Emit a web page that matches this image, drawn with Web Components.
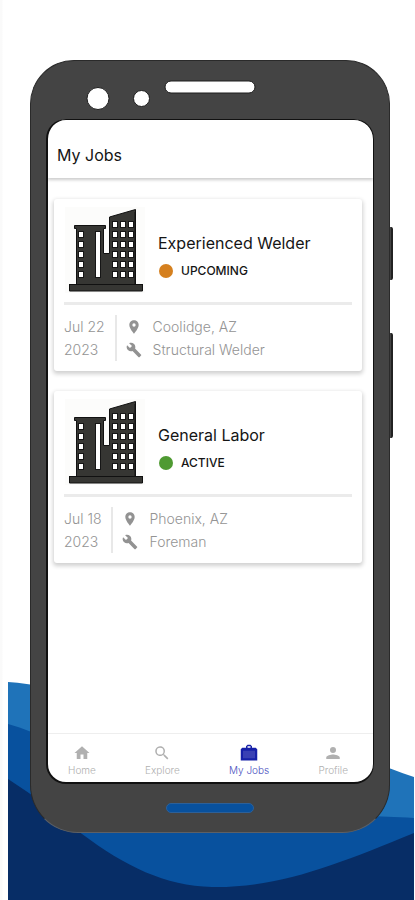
<!DOCTYPE html>
<html lang="en">
<head>
<meta charset="utf-8">
<meta name="viewport" content="width=device-width, initial-scale=1">
<title>My Jobs</title>
<style>
body { margin: 0; background: #fff; font-family: Inter, Roboto, sans-serif; color: #151515; }
</style>
</head>
<body>
<promo-scene>
  <phone-frame>
    <app-header>My Jobs</app-header>
    <job-list>
      <job-card status="upcoming" month="Jul 22" year="2023" place="Coolidge, AZ" role-name="Structural Welder">Experienced Welder</job-card>
      <job-card status="active" month="Jul 18" year="2023" place="Phoenix, AZ" role-name="Foreman">General Labor</job-card>
    </job-list>
    <tab-bar>
      <tab-item icon="home">Home</tab-item>
      <tab-item icon="search">Explore</tab-item>
      <tab-item icon="bag" active>My Jobs</tab-item>
      <tab-item icon="person">Profile</tab-item>
    </tab-bar>
  </phone-frame>
</promo-scene>
<script>
const define = (name, html, fill) => {
  const template = document.createElement('template');
  template.innerHTML = html;
  customElements.define(name, class extends HTMLElement {
    constructor() {
      super();
      this.attachShadow({ mode: 'open' }).append(template.content.cloneNode(true));
    }
    connectedCallback() { if (fill) fill(this, this.shadowRoot); }
  });
};

define('promo-scene', `
<style>
:host { display: flex; position: relative; min-height: 100vh; box-sizing: border-box; padding: 60px 25px 67px 30px; overflow: hidden;
  background: linear-gradient(90deg, #fafafa 2px, #fff 3px); }
.waves { position: absolute; left: 8px; right: 1px; bottom: 0; height: 220px; }
.waves svg { display: block; width: 100%; height: 100%; }
slot { display: flex; flex: 1; }
</style>
<div class="waves" aria-hidden="true">
<svg viewBox="8 680 406 220" preserveAspectRatio="none">
<path fill="#1f73b9" d="M8 682C110 690 170 735 240 735S350 755 414 777V900H8Z"/>
<path fill="#08519e" d="M8 724C80 744 130 800 220 812S330 812 414 818V900H8Z"/>
<path fill="#072d66" d="M8 779C45 803 65 820 82 834C125 866 165 886 212 887C280 888 338 864 414 833V900H8Z"/>
</svg></div>
<slot></slot>`);

define('phone-frame', `
<style>
:host { display: flex; flex: 1; flex-direction: column; position: relative; box-sizing: border-box; padding: 0 15px;
  background: #444; border: 1px solid #2a2a2a; border-bottom-color: #5c6066; border-radius: 44px 44px 48px 48px; }
.top svg { display: block; width: 100%; height: 58px; }
.screen { flex: 1; display: flex; flex-direction: column; background: #fff; border: 1px solid #111; border-width: 1px 1px 2px 2px; border-radius: 20px; overflow: hidden; }
.bottom { display: flex; justify-content: center; align-items: center; height: 48px; }
.bottom span { width: 86px; height: 8px; border: 1px solid #2d6098; border-radius: 5px; background: #08519e; }
.key { position: absolute; right: -4px; width: 3px; box-sizing: border-box; background: #444; border-right: 2px solid #222; border-radius: 0 2px 2px 0; }
.k1 { top: 166px; height: 53px; }
.k2 { top: 272px; height: 105px; }
</style>
<span class="key k1"></span><span class="key k2"></span>
<div class="top" aria-hidden="true"><svg viewBox="46 61 328 58">
<g fill="#fff" stroke="#1c1c1c"><circle cx="98" cy="98.5" r="11"/><circle cx="141.5" cy="98.5" r="8"/><rect x="165" y="81" width="90" height="12" rx="6"/></g>
</svg></div>
<div class="screen"><slot></slot></div>
<div class="bottom"><span></span></div>`);

define('app-header', `
<style>
:host { display: flex; align-items: center; height: 58px; padding: 12px 9px 0; box-sizing: border-box; box-shadow: 0 2px 3px #ccc; }
h1 { margin: 0; font-size: 16px; line-height: 20px; font-weight: 400; }
</style>
<h1><slot></slot></h1>`);

define('job-list', `
<style>
:host { display: flex; flex: 1; flex-direction: column; gap: 20px; padding: 21px 11px 21px 6px; }
</style>
<slot></slot>`);

const grid = (xs, ys, w, h) => ys.map(y => xs.map(x => `<rect x="${x}" y="${y}" width="${w}" height="${h}"/>`).join('')).join('');
const building = `<svg viewBox="65 207 80 86" width="80" height="86" aria-hidden="true">
<rect x="65" y="207" width="80" height="86" fill="#fcfcfb"/>
<g fill="#363633" stroke="#111" stroke-width="1">
<path d="M74.5 225.5h31v3h-2v25h6v-36.5l26-7.5v75h7v6.5h-73v-6.5h7v-56h-2z"/></g>
<path d="M69 284.500h74M76.500 229v55M103.500 229v24M135 212v72" stroke="#111" fill="none"/>
<g fill="#fff" stroke="#161616" stroke-width="1">
${grid([78.5], [231.5, 241.5, 251.5, 261.5, 271.5], 5, 6)}
${grid([112.5, 120.5, 128.5], [221.5, 231.5, 241.5, 251.5, 261.5, 271.5], 5, 6)}
<rect x="95.5" y="231.5" width="5" height="46"/></g></svg>`;
const pin = '<svg viewBox="0 0 24 24" width="16" height="16" aria-hidden="true"><path fill="#929292" d="M12 2C8.130 2 5 5.130 5 9c0 5.250 7 13 7 13s7-7.750 7-13c0-3.870-3.130-7-7-7zm0 9.500a2.500 2.500 0 1 1 0-5 2.500 2.500 0 0 1 0 5z"/></svg>';
const wrench = '<svg viewBox="0 0 24 24" width="16" height="16" aria-hidden="true"><path fill="#929292" d="M22.700 19l-9.100-9.100c.9-2.300.4-5-1.500-6.900-2-2-5-2.400-7.400-1.300L9 6 6 9 1.600 4.700C.4 7.100.9 10.100 2.900 12.100c1.900 1.900 4.600 2.400 6.900 1.500l9.100 9.100c.4.4 1 .4 1.400 0l2.300-2.300c.5-.4.5-1.100.1-1.400z"/></svg>';

define('job-card', `
<style>
:host { display: block; box-sizing: border-box; background: #fff; border-radius: 3px; padding: 8px 10px 10px; box-shadow: 0 2px 4px 1px #d0d0d0; }
.head { display: flex; gap: 13px; height: 95px; }
.head svg { display: block; flex: none; margin-left: 1px; }
.info { padding-top: 25px; }
h2 { margin: 0 0 9px; font-size: 16px; line-height: 22px; font-weight: 400; }
.status { display: flex; align-items: center; gap: 8px; font-size: 12px; line-height: 16px; font-weight: 500; padding-left: 1px; }
.dot { width: 14px; height: 14px; border-radius: 50%; background: #d5801f; }
:host([status="active"]) .dot { background: #4f9a32; }
.meta { display: flex; border-top: 3px solid #ebebeb; padding-top: 10px; font-size: 14px; line-height: 23px; font-weight: 300; color: #949494; }
.date { padding-right: 10px; border-right: 2px solid #e8e8e8; }
.date span { display: block; }
ul { list-style: none; margin: 0; padding: 0 0 0 9px; }
li { display: flex; align-items: center; gap: 11px; }
</style>
<article>
<div class="head">${building}<div class="info"><h2><slot></slot></h2><div class="status"><span class="dot"></span><span id="status"></span></div></div></div>
<div class="meta"><div class="date"><span id="month"></span><span id="year"></span></div>
<ul><li>${pin}<span id="place"></span></li><li>${wrench}<span id="role-name"></span></li></ul></div>
</article>`, (el, root) => {
  for (const key of ['status', 'month', 'year', 'place', 'role-name']) {
    const value = el.getAttribute(key);
    root.getElementById(key).textContent = key === 'status' ? value.toUpperCase() : value;
  }
});

define('tab-bar', `
<style>
:host { display: block; border-top: 1px solid #eee; }
nav { display: flex; justify-content: space-between; height: 48px; padding: 0 25px 0 20px; }
</style>
<nav aria-label="Main"><slot></slot></nav>`);

const icons = {
  home: '<path d="M10 20v-6h4v6h5v-8h3L12 3 2 12h3v8z"/>',
  search: '<path d="M15.5 14h-.8l-.3-.3A6.5 6.5 0 1 0 13.700 14.400l.3.3v.8l5 5 1.500-1.500zm-6 0a4.500 4.500 0 1 1 0-9 4.500 4.500 0 0 1 0 9z"/>',
  bag: '<path fill="#1620a8" d="M8 5V3l2-2h4l2 2v2h5l2 2v15H1V7l2-2zm2 0h4V3h-4z"/><path fill="#3940b4" d="M4 9h16v10H4z"/>',
  person: '<path d="M12 12a4 4 0 1 0 0-8 4 4 0 0 0 0 8zm0 2c-2.700 0-9 1.300-9 4v2h18v-2c0-2.700-6.300-4-9-4z"/>'
};
define('tab-item', `
<style>
:host { display: block; }
a { display: flex; flex-direction: column; align-items: center; padding-top: 10px; gap: 1px; font-size: 10px; line-height: 14px; font-weight: 300; color: #b0b0b0; text-decoration: none; }
svg { fill: #b0b0b0; }
:host([active]) a { color: #4a4fc0; }
</style>
<a href="#"><svg viewBox="0 0 24 24" width="18" height="18" aria-hidden="true"></svg><slot></slot></a>`, (el, root) => {
  root.querySelector('svg').innerHTML = icons[el.getAttribute('icon')];
  if (el.hasAttribute('active')) root.querySelector('a').setAttribute('aria-current', 'page');
});
</script>
</body>
</html>
